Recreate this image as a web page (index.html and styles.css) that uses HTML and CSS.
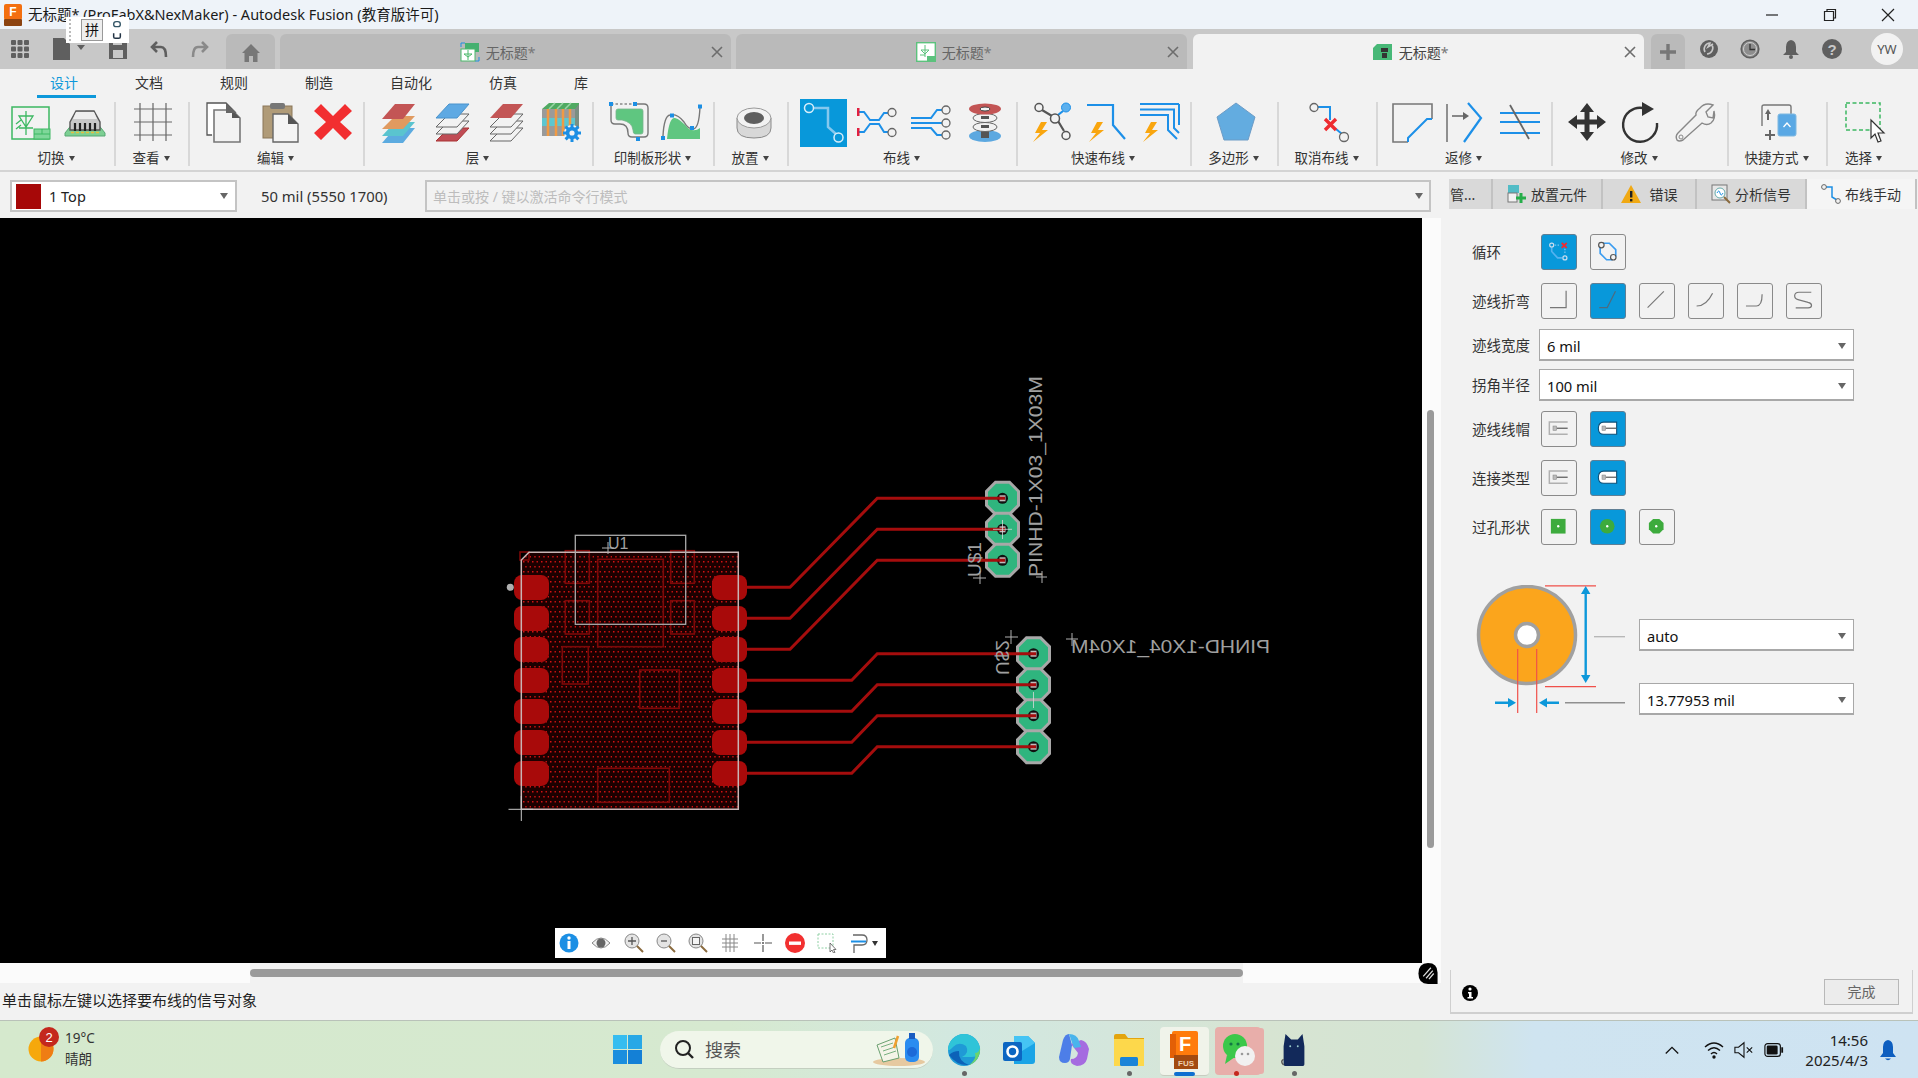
FILE: index.html
```html
<!DOCTYPE html>
<html lang="zh">
<head>
<meta charset="utf-8">
<title>无标题* - Autodesk Fusion</title>
<link rel="stylesheet" href="styles.css">
</head>
<body>
<svg class="defs" width="0" height="0">
  <defs>
    <pattern id="dots" width="9" height="10" patternUnits="userSpaceOnUse"><rect width="9" height="10" fill="#1c0000"/><rect x="1" y="1" width="1.500" height="1.500" fill="#d01212"/><rect x="5.500" y="1" width="1.500" height="1.500" fill="#c01010"/><rect x="3.200" y="6" width="1.500" height="1.500" fill="#c01010"/><rect x="7.700" y="6" width="1.500" height="1.500" fill="#d01212"/></pattern>
    <polygon id="bolt" points="8,0 2,11 7,11 0,20 15,8 9,8 14,0" fill="#f9a60f"/>
    <g id="pcbpad"><polygon points="-16,-7 -7,-16 7,-16 16,-7 16,7 7,16 -7,16 -16,7" fill="#2fb57e" stroke="#a8a8a8" stroke-width="3"/><circle r="5.500" fill="#111"/><rect x="-3" y="-3" width="6" height="6" fill="#bdbdbd"/></g>
    <g id="smd"><rect width="35" height="25" rx="8" fill="#a80a0a"/></g>
  </defs>
</svg>

<header class="titlebar">
  <svg class="app-icon" viewBox="0 0 18 22"><rect width="18" height="16" rx="2" fill="#f36f10"/><rect y="15" width="18" height="7" rx="1" fill="#8c4412"/><text x="9" y="12" class="app-f">F</text></svg>
  <span class="title-text">无标题* (ProFabX&amp;NexMaker) - Autodesk Fusion (教育版许可)</span>
  <div class="winctl">
    <svg viewBox="0 0 14 14"><path d="M1 7H13" stroke="#222" stroke-width="1.200"/></svg>
    <svg viewBox="0 0 14 14"><path d="M4 3V1.500H12.500V10H11M1.500 3.500H10.500V12.500H1.500Z" stroke="#222" stroke-width="1.200" fill="none"/></svg>
    <svg viewBox="0 0 14 14"><path d="M1 1L13 13M13 1L1 13" stroke="#222" stroke-width="1.200"/></svg>
  </div>
</header>
<div class="ime">
  <span class="ime-grip"></span>
  <span class="ime-key">拼</span>
  <svg viewBox="0 0 12 24" class="ime-ic"><rect x="2" y="2" width="8" height="6" rx="3" fill="none" stroke="#356" stroke-width="1.600"/><path d="M2 16v4q0 2 2 2h4q2 0 2-2v-4" fill="none" stroke="#234" stroke-width="1.800"/></svg>
</div>

<nav class="tabstrip">
  <div class="qa">
    <svg class="qa-grid" viewBox="0 0 18 18" fill="#5f5f5f"><rect width="5" height="5" rx="1"/><rect x="6.500" width="5" height="5" rx="1"/><rect x="13" width="5" height="5" rx="1"/><rect y="6.500" width="5" height="5" rx="1"/><rect x="6.500" y="6.500" width="5" height="5" rx="1"/><rect x="13" y="6.500" width="5" height="5" rx="1"/><rect y="13" width="5" height="5" rx="1"/><rect x="6.500" y="13" width="5" height="5" rx="1"/><rect x="13" y="13" width="5" height="5" rx="1"/></svg>
    <svg class="qa-file" viewBox="0 0 32 22"><path d="M0 0H11L17 6V22H0Z" fill="#5f5f5f"/><path d="M24 7H32L28 12Z" fill="#5f5f5f"/></svg>
    <svg class="qa-save" viewBox="0 0 18 20"><path d="M0 0H15L18 3V20H0Z" fill="#5f5f5f"/><rect x="4" y="0" width="9" height="6" fill="#c8c8c8"/><rect x="4" y="11" width="10" height="8" fill="#c8c8c8"/></svg>
    <svg class="qa-undo" viewBox="0 0 18 18"><path d="M7 2L2 7L7 12M3 7H11Q16 7 16 17" fill="none" stroke="#5f5f5f" stroke-width="2.600"/></svg>
    <svg class="qa-redo" viewBox="0 0 18 18"><path d="M11 2L16 7L11 12M15 7H7Q2 7 2 17" fill="none" stroke="#8a8a8a" stroke-width="2.600"/></svg>
  </div>
  <div class="tab tab-home"><svg viewBox="0 0 20 20"><path d="M10 1L19 10H16.500V19H12V13H8V19H3.500V10H1Z" fill="#777"/></svg></div>
  <div class="tab">
    <svg class="tab-ic" viewBox="0 0 20 20"><path d="M1 5V1H5M15 19H19V15" stroke="#1f8fe0" fill="none"/><rect x="5" y="1" width="14" height="9" fill="#46b070"/><rect x="1" y="7" width="14" height="12" fill="#fff" stroke="#4bb86a"/><path d="M8 8V18M4 12H12L8 15Z" stroke="#4bb86a" fill="none"/></svg>
    <span>无标题<em>*</em></span>
    <svg class="tab-x" viewBox="0 0 12 12"><path d="M1 1L11 11M11 1L1 11" stroke="#6d6d6d" stroke-width="1.600"/></svg>
  </div>
  <div class="tab">
    <svg class="tab-ic" viewBox="0 0 20 20"><rect x=".7" y=".7" width="18.600" height="18.600" fill="#fff" stroke="#5cc27d" stroke-width="1.400"/><path d="M9 3V15M5 8H13L9 12ZM4 13H9" stroke="#5cc27d" fill="none"/><rect x="11" y="14" width="8" height="5" fill="#5cc27d"/></svg>
    <span>无标题<em>*</em></span>
    <svg class="tab-x" viewBox="0 0 12 12"><path d="M1 1L11 11M11 1L1 11" stroke="#6d6d6d" stroke-width="1.600"/></svg>
  </div>
  <div class="tab tab-on">
    <svg class="tab-ic" viewBox="0 0 20 16"><path d="M4 0H19V16H0V4Z" fill="#47b877"/><rect x="8" y="4" width="7" height="4" fill="#333"/><rect x="9" y="9" width="5" height="5" fill="#333"/></svg>
    <span>无标题<em>*</em></span>
    <svg class="tab-x" viewBox="0 0 12 12"><path d="M1 1L11 11M11 1L1 11" stroke="#6d6d6d" stroke-width="1.600"/></svg>
  </div>
  <div class="tab tab-plus"><svg viewBox="0 0 16 16"><path d="M8 0V16M0 8H16" stroke="#777" stroke-width="3.400"/></svg></div>
  <div class="tray-top">
    <svg viewBox="0 0 20 20"><circle cx="10" cy="10" r="9" fill="#5f5f5f"/><path d="M6 13A6 6 0 0 1 11 4L9 8L14 5M13 6A6 6 0 0 1 8 15" fill="none" stroke="#c8c8c8" stroke-width="1.600"/></svg>
    <svg viewBox="0 0 20 20"><circle cx="10" cy="10" r="8.800" fill="#8d8d8d" stroke="#5f5f5f" stroke-width="1.600"/><circle cx="10" cy="10" r="6.500" fill="#8d8d8d" stroke="#d0d0d0"/><path d="M10 5V10.500H15" fill="none" stroke="#333" stroke-width="1.300"/></svg>
    <svg viewBox="0 0 20 20"><path d="M10 1Q15 2 15 8V13L18 16H2L5 13V8Q5 2 10 1Z" fill="#5f5f5f"/><circle cx="10" cy="18" r="2" fill="#5f5f5f"/></svg>
    <svg viewBox="0 0 20 20"><circle cx="10" cy="10" r="10" fill="#5f5f5f"/><text x="10" y="15.500" class="help-q">?</text></svg>
    <span class="avatar">YW</span>
  </div>
</nav>

<section class="ribbon">
  <div class="rtabs">
    <span class="rtab rtab-on">设计</span><span class="rtab">文档</span><span class="rtab">规则</span><span class="rtab">制造</span><span class="rtab">自动化</span><span class="rtab">仿真</span><span class="rtab">库</span>
  </div>
  <div class="rgroups">
    <div class="rg w116"><div class="ics">
      <svg class="ic" viewBox="0 0 40 40"><rect x="1" y="5" width="37" height="32" fill="none" stroke="#3cb862" stroke-width="1.500"/><path d="M15 9V33M8 14H22L15 25ZM8 26H22M5 22L10 18M5 27L10 23" fill="none" stroke="#3cb862" stroke-width="1.300"/><rect x="23" y="27" width="16" height="10" fill="#7fd79a" stroke="#3cb862"/><path d="M23 32H39M31 27V32" stroke="#3cb862"/></svg>
      <svg class="ic" viewBox="0 0 40 40"><path d="M0 31L8 21H32L40 31V34H0Z" fill="#7dcf93" stroke="#56a873"/><path d="M5 20L11 9H29L35 20V28H5Z" fill="#c8c8c8" stroke="#555" stroke-width="1.400"/><path d="M11 10H29L32 17H8Z" fill="#eee"/><path d="M10 21V29M15 21V29M20 21V29M25 21V29M30 21V29" stroke="#222" stroke-width="2.200"/><path d="M6 30.500H34" stroke="#e8c040" stroke-width="1.500" stroke-dasharray="3 2"/></svg>
    </div><div class="rlabel">切换<i></i></div></div>
    <div class="rg w74"><div class="ics">
      <svg class="ic" viewBox="0 0 40 40"><path d="M7 1V39M20 1V39M33 1V39M1 7H39M1 20H39M1 33H39" stroke="#666" stroke-width="1.200"/></svg>
    </div><div class="rlabel">查看<i></i></div></div>
    <div class="rg w175"><div class="ics ics-edit">
      <svg class="ic" viewBox="0 0 40 40"><path d="M6 33H1V1H20L30 11" fill="#fff" stroke="#555" stroke-width="1.300"/><path d="M8 8H26L34 16V40H8Z" fill="#f2f2f2" stroke="#777" stroke-width="1.600"/><path d="M26 8V16H34Z" fill="#555"/><path d="M20 1L30 11H20Z" fill="#666"/></svg>
      <svg class="ic" viewBox="0 0 40 40"><rect x="3" y="4" width="29" height="32" fill="#b09b78" stroke="#8a7658"/><rect x="10" y="1" width="15" height="6" rx="2" fill="#777"/><path d="M13 12H28L38 22V40H13Z" fill="#f4f4f4" stroke="#666" stroke-width="1.400"/><path d="M28 12V22H38Z" fill="#555"/></svg>
      <svg class="ic" viewBox="0 0 40 40"><path d="M7 2L19 14L31 2L38 9L26 20L38 31L31 38L19 26L7 38L0 31L12 20L0 9Z" fill="#f22e30"/></svg>
    </div><div class="rlabel">编辑<i></i></div></div>
    <div class="rg w229"><div class="ics">
      <svg class="ic" viewBox="0 0 40 40"><polygon points="16,26 36,26 24,41 3,41" fill="#5cabe0"/><polygon points="16,20 36,20 24,34 3,34" fill="#5ac4cf"/><polygon points="16,14 36,14 24,27 3,27" fill="#e09a60"/><polygon points="16,2 36,2 24,17 3,17" fill="#c35555"/></svg>
      <svg class="ic" viewBox="0 0 40 40"><polygon points="16,26 36,26 24,39 3,39" fill="#c04c55" stroke="#a33"/><polygon points="16,19 36,19 24,32 3,32" fill="#f2f2f2" stroke="#666"/><polygon points="16,12 36,12 24,25 3,25" fill="#f2f2f2" stroke="#666"/><polygon points="16,2 36,2 24,16 3,16" fill="#5ea9e3" stroke="#4a93cc"/></svg>
      <svg class="ic" viewBox="0 0 40 40"><polygon points="16,26 36,26 24,39 3,39" fill="#f2f2f2" stroke="#666"/><polygon points="16,19 36,19 24,32 3,32" fill="#f2f2f2" stroke="#666"/><polygon points="16,12 36,12 24,25 3,25" fill="#f2f2f2" stroke="#666"/><polygon points="16,2 36,2 24,16 3,16" fill="#c35555"/></svg>
      <svg class="ic" viewBox="0 0 40 40"><rect x="1" y="7" width="33" height="27" fill="#9a9a9a"/><path d="M1 20H34" stroke="#5dc6d0" stroke-width="8"/><path d="M8 1H38V8L34 7H1Z" fill="#50aa62"/><path d="M14 1L8 7M22 1L16 7M30 1L24 7" stroke="#9ad6a6" stroke-width="1.500"/><path d="M7 7V34M15 7V34M22 7V34M29 7V30" stroke="#f09a44" stroke-width="2.500"/><path d="M34 7L38 2V26L34 30Z" fill="#7a8f82"/><circle cx="31" cy="31" r="8" fill="#f2f2f2"/><path d="M31 22V40M22 31H40M24.600 24.600L37.400 37.400M37.400 24.600L24.600 37.400" stroke="#1c8fe4" stroke-width="3"/><circle cx="31" cy="31" r="6.200" fill="#1c8fe4"/><circle cx="31" cy="31" r="2.600" fill="#f2f2f2"/></svg>
    </div><div class="rlabel">层<i></i></div></div>
    <div class="rg w121"><div class="ics">
      <svg class="ic" viewBox="0 0 40 40"><path d="M27 2H36Q40 2 40 6V31Q40 35 36 35H24Q20 35 20 31Q20 22 12 22H7Q3 22 3 18V2" fill="none" stroke="#777" stroke-width="1.400"/><path d="M3 2H27" stroke="#555" stroke-dasharray="2.500 2"/><path d="M8 9Q8 7 10 7H33Q35 7 35 9V30Q35 32 33 32H27Q25 32 25 28Q24 20 14 18H10Q8 18 8 16Z" fill="#5fc680" stroke="#7ab48e" stroke-width=".8"/><rect x="1" y="0" width="4" height="4" fill="#1c8fe4"/><rect x="25" y="0" width="4" height="4" fill="#1c8fe4"/><rect x="28" y="35" width="4" height="4" fill="#1c8fe4"/></svg>
      <svg class="ic" viewBox="0 0 40 40"><path d="M5 37Q7 15 13 16Q18 17 27 27Q33 30 38 26V37Z" fill="#5fc680"/><path d="M1 34Q2 14 8 13Q15 11 22 20Q26 27 31 27Q37 27 38 5" fill="none" stroke="#777" stroke-width="1.400"/><rect x="-1" y="34" width="4" height="4" fill="#1c8fe4"/><rect x="8" y="11.500" width="4" height="4" fill="#1c8fe4"/><rect x="28" y="24" width="4" height="4" fill="#1c8fe4"/><rect x="36" y="2.500" width="4" height="4" fill="#1c8fe4"/></svg>
    </div><div class="rlabel">印制板形状<i></i></div></div>
    <div class="rg w74"><div class="ics ics-place">
      <svg class="ic" viewBox="0 0 40 40"><path d="M3 16V26Q3 36 20 36Q37 36 37 26V16Z" fill="#d8d8d8" stroke="#8a8a8a"/><ellipse cx="20" cy="16" rx="17" ry="10" fill="#f2f2f2" stroke="#9a9a9a"/><ellipse cx="20" cy="16" rx="10" ry="6" fill="#5f5f5f"/></svg>
    </div><div class="rlabel">放置<i></i></div></div>
    <div class="rg w229"><div class="ics ics-route">
      <svg class="tile-route" viewBox="0 0 47 48"><rect width="47" height="48" fill="#0898da"/><path d="M13 9H28V28L36 35" fill="none" stroke="#85c8ee" stroke-width="2.500"/><circle cx="9" cy="9" r="4.500" fill="#0898da" stroke="#d8eefa" stroke-width="1.500"/><circle cx="38.500" cy="38.500" r="4.500" fill="#0898da" stroke="#d8eefa" stroke-width="1.500"/></svg>
      <svg class="ic" viewBox="0 0 40 40"><path d="M2 10H7L13 18H22L27 11H31M2 30H7L13 22H22L27 30H31" fill="none" stroke="#1d90e8" stroke-width="2"/><rect y="6" width="2.500" height="8" fill="#e02040"/><rect y="26" width="2.500" height="8" fill="#e02040"/><circle cx="35" cy="10.500" r="4" fill="#f2f2f2" stroke="#666" stroke-width="1.300"/><circle cx="35" cy="30.500" r="4" fill="#f2f2f2" stroke="#666" stroke-width="1.300"/></svg>
      <svg class="ic" viewBox="0 0 40 40"><path d="M0 16H20L26 8H31M0 21H31M0 26H20L26 33H31" fill="none" stroke="#1d90e8" stroke-width="2"/><circle cx="35" cy="8" r="4" fill="#f2f2f2" stroke="#666" stroke-width="1.300"/><circle cx="35" cy="21" r="4" fill="#f2f2f2" stroke="#666" stroke-width="1.300"/><circle cx="35" cy="33" r="4" fill="#f2f2f2" stroke="#666" stroke-width="1.300"/></svg>
      <svg class="ic" viewBox="0 0 40 40"><ellipse cx="20" cy="34" rx="16" ry="6" fill="#5ca8e0"/><rect x="16" y="6" width="8" height="30" fill="#555"/><ellipse cx="20" cy="25" rx="12" ry="4.500" fill="#f2f2f2" stroke="#666"/><ellipse cx="20" cy="16" rx="12" ry="4.500" fill="#f2f2f2" stroke="#666"/><rect x="16" y="14" width="8" height="3" fill="#555"/><rect x="16" y="23" width="8" height="3" fill="#555"/><ellipse cx="20" cy="7" rx="16" ry="5.500" fill="#c35555"/><ellipse cx="20" cy="7" rx="5" ry="2" fill="#f2f2f2" stroke="#444"/></svg>
    </div><div class="rlabel">布线<i></i></div></div>
    <div class="rg w174"><div class="ics">
      <svg class="ic" viewBox="0 0 40 40"><path d="M11 8L21 14M27 19L33 29" stroke="#555" stroke-width="2.200"/><path d="M27 13L32 9" stroke="#1d90e8" stroke-width="2.200"/><circle cx="8" cy="5.500" r="4" fill="#f2f2f2" stroke="#555" stroke-width="1.500"/><circle cx="35" cy="5.500" r="4.500" fill="#5cb0ee" stroke="#1d90e8"/><circle cx="24" cy="16.500" r="4.500" fill="#f2f2f2" stroke="#555" stroke-width="1.500"/><circle cx="35" cy="33.500" r="4" fill="#f2f2f2" stroke="#555" stroke-width="1.500"/><use href="#bolt" x="2" y="20"/></svg>
      <svg class="ic" viewBox="0 0 40 40"><path d="M2 3H28V23L40 37" fill="none" stroke="#1d90e8" stroke-width="2.200"/><use href="#bolt" x="4" y="20"/></svg>
      <svg class="ic" viewBox="0 0 40 40"><path d="M1 2H40M1 7.500H35V26L40 31M1 13H29V28L38 37" fill="none" stroke="#1d90e8" stroke-width="2"/><path d="M40 2V23" stroke="#1d90e8" stroke-width="2"/><use href="#bolt" x="4" y="20"/></svg>
    </div><div class="rlabel">快速布线<i></i></div></div>
    <div class="rg w87"><div class="ics">
      <svg class="ic" viewBox="0 0 40 40"><polygon points="20,1 39,15 32,38 8,38 1,15" fill="#63ace0" stroke="#6d9cc6"/></svg>
    </div><div class="rlabel">多边形<i></i></div></div>
    <div class="rg w99"><div class="ics">
      <svg class="ic" viewBox="0 0 40 40"><path d="M9 5H21V18M27 27L33 32" fill="none" stroke="#1d90e8" stroke-width="2"/><circle cx="5" cy="5.500" r="4" fill="#f2f2f2" stroke="#666" stroke-width="1.300"/><circle cx="35" cy="35" r="4.500" fill="#f2f2f2" stroke="#666" stroke-width="1.300"/><path d="M16 17L27 28M27 17L16 28" stroke="#ee2b30" stroke-width="3.400"/></svg>
    </div><div class="rlabel">取消布线<i></i></div></div>
    <div class="rg w175"><div class="ics">
      <svg class="ic" viewBox="0 0 40 40"><path d="M16 40H1V2H40V17" fill="none" stroke="#777" stroke-width="1.600"/><path d="M16 40V36L35 17H40" fill="none" stroke="#1d90e8" stroke-width="2"/></svg>
      <svg class="ic" viewBox="0 0 40 40"><path d="M1 2V40M6 14H20" stroke="#666" stroke-width="1.400"/><path d="M17 10L23 14L17 18Z" fill="#666"/><path d="M22 1L35 16L18 40" fill="none" stroke="#1d90e8" stroke-width="2.200"/></svg>
      <svg class="ic" viewBox="0 0 40 40"><path d="M0 11H40M0 20H40M0 31H40" stroke="#1d90e8" stroke-width="2.200"/><path d="M10 3L29 37" stroke="#666" stroke-width="1.800"/></svg>
    </div><div class="rlabel">返修<i></i></div></div>
    <div class="rg w176"><div class="ics">
      <svg class="ic" viewBox="0 0 40 40"><path d="M20 1L27 10H22.500V17.500H30V13L39 20L30 27V22.500H22.500V30H27L20 39L13 30H17.500V22.500H10V27L1 20L10 13V17.500H17.500V10H13Z" fill="#333"/></svg>
      <svg class="ic" viewBox="0 0 40 40"><path d="M22 6A17 17 0 1 0 36 21" fill="none" stroke="#333" stroke-width="2.400"/><path d="M21 0L33 7L21 14Z" fill="#333"/></svg>
      <svg class="ic" viewBox="0 0 40 40"><path d="M25 6Q30 0 38 3L31 10L33 15L38 16L39 9Q41 17 36 21Q32 24 27 21L8 38Q4 40 2 38Q0 34 3 31L21 13Q20 10 25 6Z" fill="#f2f2f2" stroke="#888" stroke-width="1.400"/><circle cx="6" cy="35" r="2" fill="none" stroke="#888"/></svg>
    </div><div class="rlabel">修改<i></i></div></div>
    <div class="rg w99"><div class="ics">
      <svg class="ic" viewBox="0 0 40 40"><path d="M3 24V5Q3 3 5 3H30Q32 3 32 5V12" fill="none" stroke="#777" stroke-width="1.400"/><path d="M6 12L9 7L12 12H10V18H8V12Z" fill="#666"/><path d="M6 33H16M11 28V38" stroke="#666" stroke-width="2"/><rect x="19" y="12" width="18" height="22" rx="2" fill="#5aa8e4" stroke="#7fb8e0"/><path d="M24.500 25L28 21L31.500 25" fill="none" stroke="#fff" stroke-width="1.300"/></svg>
    </div><div class="rlabel">快捷方式<i></i></div></div>
    <div class="rg w90"><div class="ics">
      <svg class="ic" viewBox="0 0 40 40"><rect x="2" y="1" width="34" height="27" fill="none" stroke="#3cb862" stroke-width="1.500" stroke-dasharray="4 2.500"/><path d="M27 18V36L31 32L34 40L37 39L34 31H40Z" fill="#fff" stroke="#333" stroke-width="1.200"/></svg>
    </div><div class="rlabel">选择<i></i></div></div>
  </div>
</section>

<main class="work">
  <div class="leftcol">
    <div class="cmdrow">
      <div class="layer-sel"><span class="swatch"></span><span class="layer-name">1 Top</span><i class="caret"></i></div>
      <span class="coords">50 mil (5550 1700)</span>
      <div class="cmd-input"><span>单击或按 / 键以激活命令行模式</span><i class="caret"></i></div>
    </div>
    <div class="canvas-row">
      <div class="canvas">
        <svg class="pcb" viewBox="0 218 1422 745">
          <path d="M529 552H738V809H521V560Z" fill="url(#dots)"/>
          <g class="keepout">
            <rect x="565.300" y="550.700" width="24" height="32.600"/><rect x="670.700" y="550.700" width="23.600" height="32.600"/><rect x="565.300" y="600.700" width="24" height="33.300"/><rect x="670.700" y="600.700" width="23.600" height="33.300"/><rect x="597.700" y="559.300" width="65.600" height="87.400"/><rect x="562.300" y="646.700" width="26" height="37.300"/><rect x="639.700" y="670" width="39.600" height="38.300"/><rect x="597.700" y="768.300" width="71.600" height="34"/><rect x="520" y="552" width="9" height="8"/>
          </g>
          <use href="#smd" x="514" y="575"/><use href="#smd" x="514" y="606"/><use href="#smd" x="514" y="637"/><use href="#smd" x="514" y="668"/><use href="#smd" x="514" y="699"/><use href="#smd" x="514" y="730"/><use href="#smd" x="514" y="761"/>
          <use href="#smd" x="712" y="575"/><use href="#smd" x="712" y="606"/><use href="#smd" x="712" y="637"/><use href="#smd" x="712" y="668"/><use href="#smd" x="712" y="699"/><use href="#smd" x="712" y="730"/><use href="#smd" x="712" y="761"/>
          <path class="board" d="M529 552.300H738.300V809.300H521.300V560Z"/>
          <rect class="silk" x="575.300" y="535.300" width="110.400" height="89"/>
          <text class="pcbtxt u1" x="608" y="549">U1</text>
          <path class="cross" d="M602 548H614M608 542V554"/>
          <circle cx="510.300" cy="587.300" r="3.500" fill="#b0b0b0"/>
          <path class="cross-w" d="M508.500 809.300H533M521.300 796V821"/>
          <use href="#pcbpad" x="1002.500" y="498.300"/><use href="#pcbpad" x="1002.500" y="529.300"/><use href="#pcbpad" x="1002.500" y="560.300"/>
          <use href="#pcbpad" x="1033.500" y="653.700"/><use href="#pcbpad" x="1033.500" y="684.700"/><use href="#pcbpad" x="1033.500" y="715.700"/><use href="#pcbpad" x="1033.500" y="746.700"/>
          <g class="trace">
            <path d="M747 587.300H790L877.300 498.300H1005"/><path d="M747 618.300H790L877.300 529.300H1005"/><path d="M747 649.300H790L877.300 560.300H1005"/>
            <path d="M747 680.300H851.700L877.300 653.700H1036"/><path d="M747 711.300H851.700L877.300 684.700H1036"/><path d="M747 742.300H851.700L877.300 715.700H1036"/><path d="M747 773.300H851.700L877.300 746.700H1036"/>
          </g>
          <path class="cross-t" d="M993 529.300H1012M1002.500 520V539M1033.500 692V708"/>
          <text class="pcbtxt big" transform="translate(1042 577) rotate(-90)" textLength="201" lengthAdjust="spacingAndGlyphs">PINHD-1X03_1X03M</text>
          <text class="pcbtxt big" transform="translate(981 577) rotate(-90)">U$1</text>
          <path class="cross" d="M973 578H986M980 571V584M1036 577H1047M1042 571V583"/>
          <text class="pcbtxt big" transform="translate(1270 653) scale(-1 1)" textLength="199" lengthAdjust="spacingAndGlyphs">PINHD-1X04_1X04M</text>
          <text class="pcbtxt big" transform="translate(996 675) scale(-1 1) rotate(-90)">U$2</text>
          <path class="cross" d="M1005 637H1018M1011 630V644M1066 639H1078M1072 633V646"/>
        </svg>
        <div class="view-bar">
          <svg viewBox="0 0 20 20"><circle cx="10" cy="10" r="9.500" fill="#1c8fe4"/><circle cx="10" cy="5" r="1.700" fill="#fff"/><rect x="8.500" y="8" width="3" height="8" fill="#fff"/></svg>
          <svg viewBox="0 0 20 20"><path d="M1 10Q10 0 19 10Q10 20 1 10Z" fill="#f2f2f2" stroke="#888"/><circle cx="10" cy="10" r="4.500" fill="#666"/></svg>
          <svg viewBox="0 0 20 20"><circle cx="8" cy="8" r="7" fill="#e4e4e4" stroke="#888"/><path d="M4 8H12M8 4V12" stroke="#555" stroke-width="1.300"/><path d="M13 13L19 19" stroke="#8a6a3e" stroke-width="2"/></svg>
          <svg viewBox="0 0 20 20"><circle cx="8" cy="8" r="7" fill="#e4e4e4" stroke="#888"/><path d="M5 8H11" stroke="#555" stroke-width="1.300"/><path d="M13 13L19 19" stroke="#8a6a3e" stroke-width="2"/></svg>
          <svg viewBox="0 0 20 20"><circle cx="8" cy="8" r="7" fill="#e4e4e4" stroke="#888"/><rect x="4.500" y="4.500" width="7" height="7" fill="#f4f4f4" stroke="#666"/><path d="M13 13L19 19" stroke="#8a6a3e" stroke-width="2"/></svg>
          <svg viewBox="0 0 20 20"><path d="M6 1V19M10 1V19M14 1V19M2 6H18M2 10H18M2 14H18" stroke="#888"/></svg>
          <svg viewBox="0 0 20 20"><path d="M10 1V8M10 12V19M1 10H8M12 10H19" stroke="#555" stroke-width="1.200"/><circle cx="10" cy="10" r="1" fill="#555"/></svg>
          <svg viewBox="0 0 20 20"><circle cx="10" cy="10" r="10" fill="#f23030"/><rect x="4" y="8.500" width="12" height="3.400" fill="#fff"/></svg>
          <svg viewBox="0 0 20 20"><rect x="1" y="1" width="15" height="14" fill="none" stroke="#8fd0a4" stroke-dasharray="2 1.500"/><path d="M13 10V19L15 17L16.500 20L18 19.500L16.500 16.500H19Z" fill="#fff" stroke="#555" stroke-width=".8"/></svg>
          <svg viewBox="0 0 20 20"><path d="M3 2H12Q17 2 17 7Q17 12 12 12H4V20" fill="none" stroke="#666" stroke-width="1.300"/><path d="M1 8.500H16" stroke="#1c8fe4" stroke-width="2"/></svg>
          <i class="caret caret-sm"></i>
        </div>
      </div>
      <div class="vscroll"><span class="vthumb"></span></div>
    </div>
    <div class="hscroll"><span class="hthumb"></span>
      <svg class="nav-mark" viewBox="0 0 20 22"><path d="M10 0Q20 0 20 10V22H10Q0 22 0 11Q0 0 10 0Z" fill="#000"/><path d="M5 14L13 5M8 16L15 8M11 17L16 11" stroke="#ddd" stroke-width="1.300"/></svg>
    </div>
    <div class="statusbar">单击鼠标左键以选择要布线的信号对象</div>
  </div>

  <aside class="rightcol">
    <div class="ptabs">
      <div class="ptab p42"><span>管...</span></div>
      <div class="ptab p108"><svg viewBox="0 0 20 20"><rect x="1" y="1" width="11" height="8" fill="#52bcc6"/><rect x="1" y="9" width="9" height="9" fill="#f2f2f2" stroke="#777"/><path d="M14 9V19M9 14H19" stroke="#26ae4a" stroke-width="3"/></svg><span>放置元件</span></div>
      <div class="ptab p92"><svg viewBox="0 0 20 18"><path d="M10 0L20 18H0Z" fill="#f0a914"/><rect x="9" y="6" width="2.400" height="6.500" fill="#222"/><rect x="9" y="14" width="2.400" height="2.400" fill="#222"/></svg><span class="ml">错误</span></div>
      <div class="ptab p108"><svg viewBox="0 0 20 20"><rect x="1" y="1" width="15" height="15" fill="#e6e6e6" stroke="#777"/><circle cx="9" cy="9" r="5" fill="#fff" stroke="#6aa"/><path d="M6 9Q8 5 9 9T12 9" fill="none" stroke="#1c8fe4"/><path d="M13 13L19 19" stroke="#8a6a3e" stroke-width="2"/></svg><span>分析信号</span></div>
      <div class="ptab p108 ptab-on"><svg viewBox="0 0 20 20"><path d="M4 3H11V13L16 16" fill="none" stroke="#1c8fe4" stroke-width="1.500"/><circle cx="3" cy="3" r="2.400" fill="#f2f2f2" stroke="#666"/><circle cx="17" cy="17" r="2.400" fill="#f2f2f2" stroke="#666"/></svg><span>布线手动</span></div>
    </div>
    <div class="panel">
      <div class="prow r13"><label>循环</label><div class="btns">
        <span class="pbtn on"><svg viewBox="0 0 36 36"><path d="M10.600 14V18L17 25H22" fill="none" stroke="#55b2f0" stroke-width="1.800"/><path d="M14 11H20M25 15V21" fill="none" stroke="#7dc6f0" stroke-dasharray="1.500 1.500"/><circle cx="10.600" cy="11" r="2.200" fill="none" stroke="#cde"/><circle cx="25" cy="25" r="2.200" fill="none" stroke="#cde"/><path d="M21.500 8.500L27 14M27 8.500L21.500 14" fill="none" stroke="#f02a30" stroke-width="2"/></svg></span>
        <span class="pbtn"><svg viewBox="0 0 36 36"><path d="M13 9H20L27 16V23L23 27H17L10 20V13Z" fill="none" stroke="#3a9cf0" stroke-width="1.800"/><circle cx="11.300" cy="11" r="3" fill="#f2f2f2" stroke="#555"/><circle cx="24.300" cy="24.300" r="3" fill="#f2f2f2" stroke="#555"/></svg></span>
      </div></div>
      <div class="prow r10"><label>迹线折弯</label><div class="btns">
        <span class="pbtn"><svg viewBox="0 0 36 36"><path d="M8.700 25.700H26.300V7.300"/></svg></span>
        <span class="pbtn on"><svg viewBox="0 0 36 36"><path d="M9 25.700H17.700L26.700 8"/></svg></span>
        <span class="pbtn"><svg viewBox="0 0 36 36"><path d="M8.300 25.700L26 8"/></svg></span>
        <span class="pbtn"><svg viewBox="0 0 36 36"><path d="M8.300 24Q19 24 25.700 10"/></svg></span>
        <span class="pbtn"><svg viewBox="0 0 36 36"><path d="M8.700 24H20Q26.300 24 26.300 11.300"/></svg></span>
        <span class="pbtn"><svg viewBox="0 0 36 36"><path d="M26.500 9H13C7 9 7 16 12 17L23 20C28 21 28 26 23 26H9.500"/></svg></span>
      </div></div>
      <div class="prow r8"><label>迹线宽度</label><div class="sel wide"><span>6 mil</span><i class="caret"></i></div></div>
      <div class="prow r10"><label>拐角半径</label><div class="sel wide"><span>100 mil</span><i class="caret"></i></div></div>
      <div class="prow r13"><label>迹线线帽</label><div class="btns">
        <span class="pbtn"><svg viewBox="0 0 36 36"><path class="faint" d="M28 11H8V24.300H28"/><path class="dark" d="M16 17.700H28"/><rect x="12" y="15.300" width="4" height="4.700" fill="#bbb" stroke="#888" stroke-width=".6"/></svg></span>
        <span class="pbtn on"><svg viewBox="0 0 36 36"><path d="M28 11H14Q8 11 8 17.700Q8 24.300 14 24.300H28Z" fill="#fff" stroke="#0d4f78" stroke-width="1.200"/><path class="dark" d="M16 17.700H28"/><rect x="12" y="15.300" width="4" height="4.700" fill="#bbb" stroke="#888" stroke-width=".6"/></svg></span>
      </div></div>
      <div class="prow r13"><label>连接类型</label><div class="btns">
        <span class="pbtn"><svg viewBox="0 0 36 36"><path class="faint" d="M28 11H8V24.300H28"/><path class="dark" d="M16 17.700H28"/><rect x="12" y="15.300" width="4" height="4.700" fill="#bbb" stroke="#888" stroke-width=".6"/></svg></span>
        <span class="pbtn on"><svg viewBox="0 0 36 36"><path d="M28 11H14Q8 11 8 17.700Q8 24.300 14 24.300H28Z" fill="#fff" stroke="#0d4f78" stroke-width="1.200"/><path class="dark" d="M16 17.700H28"/><rect x="12" y="15.300" width="4" height="4.700" fill="#bbb" stroke="#888" stroke-width=".6"/></svg></span>
      </div></div>
      <div class="prow r0"><label>过孔形状</label><div class="btns">
        <span class="pbtn"><svg viewBox="0 0 36 36"><rect x="9.700" y="9.700" width="16" height="16" fill="#3dab3d" stroke="none"/><circle cx="17.700" cy="17.700" r="1.300" fill="#fff" stroke="none"/></svg></span>
        <span class="pbtn on"><svg viewBox="0 0 36 36"><circle cx="17.700" cy="17.700" r="8" fill="#3dab3d" stroke="none"/><circle cx="17.700" cy="17.700" r="1.300" fill="#fff" stroke="none"/></svg></span>
        <span class="pbtn"><svg viewBox="0 0 36 36"><polygon points="14.300,9.700 21.100,9.700 25.700,14.300 25.700,21.100 21.100,25.700 14.300,25.700 9.700,21.100 9.700,14.300" fill="#3dab3d" stroke="none"/><circle cx="17.700" cy="17.700" r="1.300" fill="#fff" stroke="none"/></svg></span>
      </div></div>
      <div class="via">
        <svg class="via-diagram" viewBox="2 0 167 130">
          <circle cx="57" cy="50" r="48.500" fill="#fba51c" stroke="#a0a0a0" stroke-width="3.500"/>
          <circle cx="57" cy="50" r="11.500" fill="#fff" stroke="#a0a0a0" stroke-width="3.500"/>
          <path d="M47.700 64V128M66.700 64V128M75 .8H126M75 101.700H126" stroke="#f0504a" stroke-width="1.200" fill="none"/>
          <path d="M115.700 6V95M25 117.700H42M89 117.700H73" stroke="#0d98da" stroke-width="2.400"/>
          <path d="M115.700 1L111 9H120.400ZM115.700 98L111 90H120.400ZM46 117.700L38 113V122.400ZM69 117.700L77 113V122.400Z" fill="#0d98da"/>
          <path d="M124 51.700H155" stroke="#b4b4b4" stroke-width="1.300"/>
          <path d="M95 117.700H155" stroke="#909090" stroke-width="1.500"/>
        </svg>
        <div class="via-sels"><div class="sel narrow"><span>auto</span><i class="caret"></i></div><div class="sel narrow"><span>13.77953 mil</span><i class="caret"></i></div></div>
      </div>
      <div class="pfoot">
        <svg class="info" viewBox="0 0 16 16"><circle cx="8" cy="8" r="8" fill="#000"/><circle cx="8" cy="4" r="1.600" fill="#fff"/><path d="M6 7H9.500V12H11V13.500H5.500V12H7V8.500H6Z" fill="#fff"/></svg>
        <span class="done">完成</span>
      </div>
    </div>
  </aside>
</main>

<footer class="taskbar">
  <div class="tb-left">
    <svg class="weather" viewBox="0 0 34 36"><circle cx="14" cy="23" r="12.500" fill="#f6a80c"/><path d="M14 10.500A12.500 12.500 0 0 1 14 35.500Z" fill="#ef7d14"/><circle cx="22" cy="11" r="10" fill="#c4281d"/><text x="22" y="15.500" class="badge-n">2</text></svg>
    <div class="weather-txt"><span>19°C</span><span>晴朗</span></div>
  </div>
  <svg class="winlogo" viewBox="0 0 29 29"><rect width="14" height="14" fill="#36bdf0"/><rect x="15" width="14" height="14" fill="#28a8e6"/><rect y="15" width="14" height="14" fill="#1a8ede"/><rect x="15" y="15" width="14" height="14" fill="#1480d6"/></svg>
  <div class="search">
    <svg class="s-ic" viewBox="0 0 20 20"><circle cx="9" cy="9" r="7" fill="none" stroke="#222" stroke-width="2"/><path d="M14 14L19 19" stroke="#222" stroke-width="2.400"/></svg>
    <span class="s-txt">搜索</span>
    <svg class="s-art" viewBox="0 0 56 34"><ellipse cx="28" cy="30" rx="26" ry="4" fill="#e6c9a0"/><path d="M6 13L24 6L28 26L12 30Z" fill="#f4f4e8" stroke="#6aa070"/><path d="M10 15L22 11M12 19L24 15M13 23L25 19" stroke="#78b080"/><path d="M27 4L23 16" stroke="#f0a030" stroke-width="2.500"/><rect x="34" y="6" width="14" height="24" rx="5" fill="#2a8cf0"/><rect x="38" y="1" width="6" height="6" fill="#1a5cc0"/><circle cx="41" cy="20" r="5" fill="#1c6ad8"/></svg>
  </div>
  <div class="apps">
    <div class="app"><svg viewBox="0 0 34 34"><circle cx="17" cy="17" r="16" fill="#1f9ad6"/><path d="M1 17A16 16 0 0 1 33 17Q33 24 25 24H15Q23 20 19 13Q12 8 6 14Q2 18 1 17Z" fill="#2fc4d8"/><path d="M33 15A16 16 0 0 1 22 32Q30 26 28 20Q32 20 33 15Z" fill="#6dd46a"/><path d="M2 22Q10 33 22 32Q11 28 12 18Q6 18 2 22Z" fill="#0c62b8"/></svg><u class="dot gray"></u></div>
    <div class="app"><svg viewBox="0 0 34 34"><path d="M12 3H26L33 10V28Q33 31 30 31H12Z" fill="#1aa4e6"/><path d="M12 3H26L33 10L20 18L12 12Z" fill="#45c4f4"/><rect x="1" y="9" width="19" height="19" rx="2" fill="#0c66c2"/><circle cx="10.500" cy="18.500" r="5" fill="none" stroke="#fff" stroke-width="2.600"/></svg></div>
    <div class="app"><svg viewBox="0 0 34 34"><path d="M12 1Q8 1 6 7L2 24Q2 30 8 30Q12 30 13 26L15 12Z" fill="#4d7ee8"/><path d="M14 11L24 7Q30 8 32 16L30 26Q28 33 20 33Q12 31 14 26Q20 26 21 20Z" fill="#a56be0"/><path d="M12 1Q20 1 22 8L24 14L17 15Z" fill="#49b4ec"/></svg></div>
    <div class="app"><svg viewBox="0 0 30 34"><path d="M0 3Q0 1 2 1H11L14 5H30V33H0Z" fill="#e3a40e"/><rect y="6" width="30" height="27" fill="#fdd84b"/><rect x="6" y="24" width="18" height="9" rx="1.500" fill="#1a84d8"/></svg><u class="dot gray"></u></div>
    <div class="app app-fus"><svg viewBox="0 0 28 38"><rect x="2" width="26" height="26" rx="2" fill="#ff7b0c"/><rect y="3" width="6" height="24" fill="#e35f06"/><rect x="4" y="24" width="24" height="14" fill="#a34a10"/><text x="15" y="20" class="fus-f">F</text><text x="16" y="35" class="fus-t">FUS</text></svg><u class="bar"></u></div>
    <div class="app app-wx"><svg viewBox="0 0 32 34"><ellipse cx="12" cy="13" rx="12" ry="12" fill="#3bc84a"/><path d="M4 22L2 31L12 24Z" fill="#3bc84a"/><circle cx="8" cy="11" r="1.600" fill="#174"/><circle cx="15" cy="11" r="1.600" fill="#174"/><ellipse cx="22" cy="23" rx="10" ry="10" fill="#f1f1f1"/><circle cx="19" cy="21" r="1.300" fill="#999"/><circle cx="25" cy="21" r="1.300" fill="#999"/></svg><u class="dot red"></u></div>
    <div class="app"><svg viewBox="0 0 26 36"><path d="M4 1L10 7H17L22 1L24 14V33Q24 35 21 35H5Q2 35 2 33V14Z" fill="#12295a"/><circle cx="9" cy="14" r="1" fill="#9cc"/><circle cx="17" cy="14" r="1" fill="#9cc"/><path d="M2 28Q-2 30 2 34" stroke="#555" stroke-width="1.500" fill="none"/></svg><u class="dot gray"></u></div>
  </div>
  <div class="tb-right">
    <svg class="t-ic" viewBox="0 0 18 12"><path d="M2 10L9 3L16 10" fill="none" stroke="#111" stroke-width="1.500"/></svg>
    <svg class="t-ic" viewBox="0 0 20 20"><path d="M1 7Q10 -1 19 7M4 10.500Q10 5 16 10.500M7 14Q10 11 13 14" fill="none" stroke="#111" stroke-width="1.400"/><circle cx="10" cy="17" r="1.700" fill="#111"/></svg>
    <svg class="t-ic" viewBox="0 0 22 20"><path d="M1 7H5L11 2V18L5 13H1Z" fill="none" stroke="#111" stroke-width="1.200"/><path d="M14 7L20 13M20 7L14 13" stroke="#111" stroke-width="1.200"/></svg>
    <svg class="t-ic" viewBox="0 0 22 16"><rect x="1" y="1" width="17" height="14" rx="3" fill="none" stroke="#111" stroke-width="1.300"/><rect x="3" y="3" width="12" height="10" rx="1.500" fill="#111"/><rect x="19" y="5" width="2" height="6" fill="#111"/></svg>
    <div class="clock"><span>14:56</span><span>2025/4/3</span></div>
    <svg class="t-bell" viewBox="0 0 18 22"><path d="M9 1Q14 2 14 8V14L17 18H1L4 14V8Q4 2 9 1Z" fill="#0d5ec0"/><path d="M6 19.500Q9 23 12 19.500Z" fill="#0d5ec0"/></svg>
  </div>
</footer>
</body>
</html>
```
FILE: styles.css
```css
* { box-sizing: border-box; }
html, body { margin: 0; padding: 0; }
body {
  width: 1918px; height: 1078px; overflow: hidden; display: flex; flex-direction: column;
  background: #f2f2f2; color: #333;
  font-family: "Noto Sans", "Noto Sans CJK SC", sans-serif; font-size: 14px;
  position: relative;
}
.defs { position: absolute; }
i, em, u { font-style: normal; text-decoration: none; }

.titlebar { height: 29px; flex: none; background: #eef3f9; display: flex; align-items: center; padding-left: 4px; color: #1a1a1a; }
.app-icon { width: 18px; height: 22px; margin-top: 1px; }
.app-f { font: bold 12px "Liberation Sans", sans-serif; fill: #fff; text-anchor: middle; }
.title-text { margin: -2px 0 0 6px; font-size: 14.500px; white-space: nowrap; }
.winctl { margin-left: auto; display: flex; gap: 44px; padding-right: 23px; }
.winctl svg { width: 14px; height: 14px; display: block; }

.ime { position: absolute; left: 66px; top: 17px; width: 63px; height: 26px; background: #fff; display: flex; align-items: center; z-index: 3; }
.ime-grip { width: 3px; height: 22px; margin-left: 3px; border-left: 2px dotted #bbb; }
.ime-key { width: 22px; height: 22px; margin-left: 9px; border: 1px solid #999; background: #eee; color: #111; font-size: 14px; line-height: 20px; text-align: center; }
.ime-ic { width: 10px; height: 22px; margin-left: 9px; }

.tabstrip { height: 40px; flex: none; background: #c8c8c8; display: flex; align-items: flex-end; position: relative; }
.qa { width: 226px; height: 40px; display: flex; align-items: center; flex: none; }
.qa svg { display: block; flex: none; }
.qa-grid { width: 18px; height: 18px; margin-left: 11px; }
.qa-file { width: 32px; height: 22px; margin-left: 24px; }
.qa-save { width: 18px; height: 20px; margin-left: 24px; }
.qa-undo { width: 18px; height: 18px; margin-left: 23px; }
.qa-redo { width: 18px; height: 18px; margin-left: 23px; }
.tab { height: 35px; width: 451px; margin-right: 5px; padding-right: 16px; background: #bababa; border-radius: 6px 6px 0 0; display: flex; align-items: center; justify-content: center; position: relative; flex: none; color: #666; }
.tab span { font-size: 14px; }
.tab em { color: #777; }
.tab-home { width: 49px; padding-right: 0; }
.tab-home svg { width: 20px; height: 20px; margin-top: 3px; }
.tab-ic { width: 20px; height: 20px; margin-right: 6px; }
.tab-x { position: absolute; right: 8px; top: 12px; width: 12px; height: 12px; }
.tab-on { background: #f2f2f2; color: #444; margin-left: 1px; margin-right: 7px; }
.tab-plus { width: 34px; margin-right: 0; padding-right: 0; }
.tab-plus svg { width: 16px; height: 16px; }
.tray-top { display: flex; align-items: center; height: 40px; margin-left: 14px; align-self: flex-start; }
.tray-top svg { width: 20px; height: 20px; margin-right: 21px; flex: none; }
.help-q { font: bold 15px "Liberation Sans", sans-serif; fill: #c8c8c8; text-anchor: middle; }
.avatar { width: 32px; height: 32px; border-radius: 50%; background: #f2f2f2; color: #555; font-size: 13px; line-height: 32px; text-align: center; margin-left: 8px; }

.ribbon { height: 103px; flex: none; background: #f2f2f2; border-bottom: 2px solid #d4d4d4; }
.rtabs { height: 33px; display: flex; padding-left: 21.500px; }
.rtab { padding: 6px 28.500px 0; line-height: 16px; font-size: 14px; color: #333; position: relative; height: 29px; }
.rtab-on { color: #0d98da; }
.rtab-on::after { content: ""; position: absolute; left: 15.500px; bottom: 0; width: 59px; height: 3px; background: #0d98da; }
.rgroups { display: flex; height: 64px; }
.rg { display: flex; flex-direction: column; align-items: center; height: 64px; padding-left: 2px; border-right: 2px solid #d8d8d8; flex: none; }
.w116 { width: 116px; } .w74 { width: 74px; } .w175 { width: 175px; } .w229 { width: 229px; } .w121 { width: 121px; }
.w174 { width: 174px; } .w87 { width: 87px; } .w99 { width: 99px; } .w176 { width: 176px; } .w90 { width: 90px; border-right: 0; padding: 0 19px 0 0; }
.ics { display: flex; gap: 14px; height: 40px; align-items: flex-start; }
.ic { width: 40px; height: 40px; display: block; flex: none; overflow: visible; }
.ics-edit { margin-left: 4px; }
.ics-place { margin-left: 3px; }
.ics-route { margin-left: -2px; }
.tile-route { width: 47px; height: 48px; margin-top: -3px; flex: none; display: block; position: relative; z-index: 1; margin-right: -4px; }
.rlabel { margin: 8px 4px 0 0; height: 16px; line-height: 16px; font-size: 13.500px; color: #333; display: flex; align-items: center; white-space: nowrap; }
.w90 .rlabel { margin-right: 0; }
.rlabel i { width: 0; height: 0; margin-left: 4px; border-left: 3.500px solid transparent; border-right: 3.500px solid transparent; border-top: 5px solid #444; }

.work { flex: 1; min-height: 0; display: flex; }
.leftcol { width: 1449px; flex: none; display: flex; flex-direction: column; }
.caret { width: 0; height: 0; border-left: 4px solid transparent; border-right: 4px solid transparent; border-top: 6px solid #666; display: block; flex: none; }
.caret-sm { border-left-width: 3px; border-right-width: 3px; border-top-width: 5px; border-top-color: #333; margin-left: -10px; }
.cmdrow { height: 46px; flex: none; display: flex; align-items: flex-start; padding: 8px 0 0 10px; }
.layer-sel { width: 227px; height: 32px; background: #fff; border: 2px solid #c4c4c4; display: flex; align-items: center; padding: 0 7px 0 4px; }
.swatch { width: 25px; height: 25px; background: #a60808; flex: none; }
.layer-name { margin-left: 8px; color: #222; font-size: 14.500px; }
.layer-sel .caret { margin-left: auto; }
.coords { margin-left: 24px; line-height: 32px; white-space: nowrap; color: #333; width: 164px; flex: none; font-size: 14.800px; }
.cmd-input { width: 1006px; height: 32px; border: 2px solid #c4c4c4; background: #f2f2f2; display: flex; align-items: center; padding: 0 6px; color: #bdbdbd; }
.cmd-input .caret { margin-left: auto; }

.canvas-row { height: 745px; flex: none; display: flex; }
.canvas { width: 1422px; height: 745px; background: #000; position: relative; flex: none; }
.pcb { width: 1422px; height: 745px; display: block; }
.keepout rect { fill: none; stroke: #7d0808; stroke-width: 1.600; }
.board { fill: none; stroke: #c9b5b5; stroke-width: 1.500; }
.silk { fill: none; stroke: #aaa; stroke-width: 1.300; }
.pcbtxt { font-family: "Liberation Sans", sans-serif; fill: #a0a0a0; }
.u1 { font-size: 16px; }
.big { font-size: 19px; }
.cross { fill: none; stroke: #b0b0b0; stroke-width: 1; }
.cross-w { fill: none; stroke: #c8c8c8; stroke-width: 1; }
.cross-t { fill: none; stroke: #d8d8d8; stroke-width: .8; }
.trace path { fill: none; stroke: #a50d0d; stroke-width: 3; }
.view-bar { position: absolute; left: 555px; bottom: 5px; width: 331px; height: 30px; background: #fff; display: flex; align-items: center; padding-left: 4px; gap: 12.300px; }
.view-bar svg { width: 20px; height: 20px; display: block; flex: none; }

.vscroll { width: 19px; flex: none; background: #fbfbfb; position: relative; }
.vthumb { position: absolute; left: 5px; top: 192px; width: 7px; height: 438px; border-radius: 4px; background: #9a9a9a; }
.hscroll { height: 20px; flex: none; position: relative; background: linear-gradient(90deg, #fbfbfb 0 250px, #f2f2f2 250px 1243px, #fbfbfb 1243px 1441px, #f2f2f2 1441px); }
.hthumb { position: absolute; left: 250px; top: 6px; width: 993px; height: 8px; border-radius: 4px; background: #9a9a9a; }
.nav-mark { position: absolute; left: 1418px; top: 0; width: 20px; height: 21px; }
.statusbar { height: 37px; flex: none; padding-left: 2px; line-height: 35px; font-size: 15px; color: #222; white-space: nowrap; }

.rightcol { flex: 1; min-width: 0; display: flex; flex-direction: column; padding-top: 7px; }
.ptabs { height: 30px; flex: none; display: flex; gap: 2px; background: #c2c2c2; margin-right: 1px; }
.ptab { height: 30px; flex: none; background: #d9d9d9; display: flex; align-items: center; justify-content: center; font-size: 14px; color: #333; white-space: nowrap; }
.ptab svg { width: 20px; height: 20px; margin-right: 4px; flex: none; }
.ptab-on { background: #f5f5f5; }
.p42 { width: 42px; justify-content: flex-start; padding-left: 1px; } .p108 { width: 108px; } .p92 { width: 92px; }
.ml { margin-left: 5px; }
.panel { flex: 1; min-height: 0; display: flex; flex-direction: column; padding-top: 25px; }
.prow { display: flex; align-items: center; padding-left: 23px; flex: none; }
.prow label { width: 67px; flex: none; font-size: 14.500px; color: #333; white-space: nowrap; padding-bottom: 2px; }
.r13 { margin-bottom: 13px; } .r10 { margin-bottom: 10px; } .r8 { margin-bottom: 8px; } .r0 { margin-bottom: 0; }
.btns { display: flex; gap: 13px; margin-left: 2px; }
.pbtn { width: 36px; height: 36px; border: 1.500px solid #8a8a8a; border-radius: 3px; background: #f2f2f2; display: block; flex: none; }
.pbtn svg { display: block; width: 33px; height: 33px; fill: none; stroke: #777; stroke-width: 1.300; overflow: visible; }
.pbtn.on { background: #0898da; border-color: #5f7f95; }
.pbtn.on svg { stroke: #4d6b80; }
.pbtn .faint { stroke: #b0b0b0; stroke-width: 1.600; }
.pbtn .dark { stroke: #555; stroke-width: 1.300; }
.sel { height: 32px; background: #fff; border: 1.500px solid #a8a8a8; border-bottom-width: 2px; display: flex; align-items: center; padding: 2px 7px 0; color: #111; font-size: 14.700px; flex: none; }
.sel .caret { margin-left: auto; }
.wide { width: 315px; }
.narrow { width: 215px; }
.via { display: flex; margin-top: 40px; padding-left: 23px; height: 130px; flex: none; }
.via-diagram { width: 167px; height: 130px; flex: none; display: block; }
.via-sels { display: flex; flex-direction: column; gap: 32px; padding-top: 34px; }
.pfoot { margin: auto 5px 6px 1px; height: 44px; flex: none; border: 1.500px solid #cfcfcf; border-top: 0; border-bottom-width: 2px; display: flex; align-items: flex-start; padding: 9px 13px 0 11px; }
.info { width: 16px; height: 16px; margin-top: 6px; }
.done { margin-left: auto; width: 75px; height: 26px; border: 1.500px solid #b8b8b8; background: #ececec; color: #666; font-size: 14px; line-height: 23px; text-align: center; }

.taskbar { height: 58px; flex: none; display: flex; align-items: center; border-top: 1px solid #b9c2b9; background: linear-gradient(90deg, #d5e9cd 0, #d6e9d0 38%, #d2e8e0 50%, #d4e6dc 58%, #d7e4d2 66%, #d4e4d4 74%, #cfe4f0 80%, #cee3f2 100%); }
.tb-left { width: 613px; flex: none; display: flex; align-items: center; padding-left: 27px; }
.weather { width: 34px; height: 36px; margin-top: -11px; }
.badge-n { font: 13px "Liberation Sans", sans-serif; fill: #fff; text-anchor: middle; }
.weather-txt { display: flex; flex-direction: column; margin: -2px 0 0 4px; font-size: 13.500px; line-height: 21px; color: #333; }
.winlogo { width: 29px; height: 29px; flex: none; display: block; }
.search { width: 273px; height: 38px; margin-left: 18px; flex: none; border-radius: 19px; background: #f0f6ea; border-bottom: 1.500px solid #c4cfc0; display: flex; align-items: center; padding-left: 14px; }
.s-ic { width: 20px; height: 20px; flex: none; }
.s-txt { margin-left: 11px; font-size: 18px; color: #555; }
.s-art { width: 56px; height: 34px; margin-left: auto; margin-right: 6px; }
.apps { display: flex; margin-left: 3.500px; flex: none; }
.app { width: 55px; height: 52px; position: relative; display: flex; align-items: center; justify-content: center; flex: none; }
.app svg { width: 34px; height: 34px; display: block; }
.app-fus::before { content: ""; position: absolute; left: 3px; top: 3px; width: 49px; height: 48px; background: #f0f3ea; border-radius: 4px; border-bottom: 1px solid #c8ccc0; }
.app-wx::before { content: ""; position: absolute; left: 3px; top: 3px; width: 46px; height: 48px; background: #e8aeaa; border-radius: 4px; box-shadow: 4px 0 0 -1px #e8aeaa; }
.app-fus svg, .app-wx svg { position: relative; }
.app-fus svg { width: 28px; height: 38px; }
.fus-f { font: bold 20px "Liberation Sans", sans-serif; fill: #fff; text-anchor: middle; }
.fus-t { font: bold 8px "Liberation Sans", sans-serif; fill: #f0d0b0; text-anchor: middle; }
.dot { position: absolute; left: 25px; bottom: 0; width: 5px; height: 5px; border-radius: 50%; }
.dot.gray { background: #666; }
.dot.red { background: #c4281d; left: 22px; }
.bar { position: absolute; left: 17px; bottom: 0; width: 21px; height: 4px; border-radius: 2px; background: #0f6fd0; }
.tb-right { margin-left: auto; display: flex; align-items: center; flex: none; padding-right: 21px; }
.t-ic { width: 20px; height: 20px; display: block; flex: none; margin-right: 10px; }
.t-ic:first-child { width: 16px; height: 12px; margin-right: 24px; }
.clock { display: flex; flex-direction: column; align-items: flex-end; font-size: 15px; line-height: 20px; color: #222; margin-left: 11px; }
.t-bell { width: 18px; height: 22px; margin-left: 11px; }
```
